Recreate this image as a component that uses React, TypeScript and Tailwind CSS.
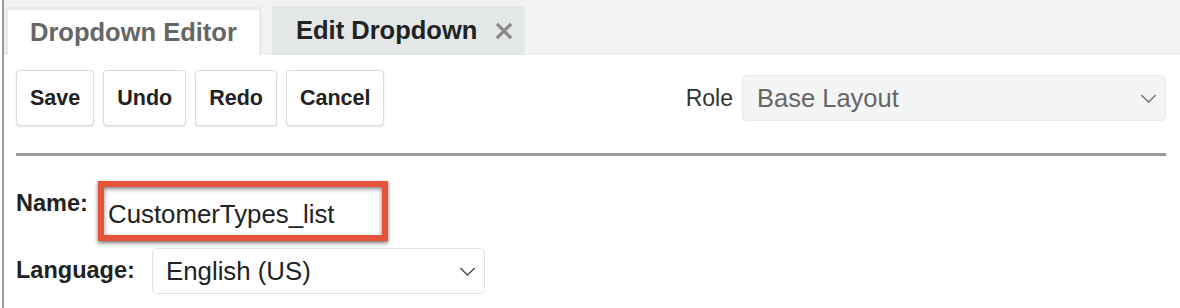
import React from 'react';

const Chevron = ({ className }: { className: string }) => (
  <svg className={className} viewBox="0 0 18 10" fill="none" stroke="currentColor" strokeWidth={1.6}>
    <path d="M1 1l8 8 8-8" />
  </svg>
);

export default function App() {
  const buttons = ['Save', 'Undo', 'Redo', 'Cancel'];

  return (
    <div className="w-[1180px] h-[308px] bg-white pl-[2px] font-['Liberation_Sans',Arial,sans-serif] text-[#333] overflow-hidden">
      <div className="h-full border-l-2 border-[#9a9a9a]">
        {/* Tab strip */}
        <div className="h-[55px] bg-[#f1f2f2] flex items-end pl-[1px] gap-[10px]">
          <div className="h-[48px] w-[257px] bg-white border-t-[3px] border-x-[3px] border-[#e7ebeb] pl-[22px] flex items-center">
            <span className="text-[25.5px] font-bold text-[#666] leading-none">Dropdown Editor</span>
          </div>
          <div className="h-[49px] w-[253px] bg-[#e3e7e8] pl-[24px] pr-[12px] flex items-center justify-between">
            <span className="text-[25.5px] font-bold text-[#222] leading-none">Edit Dropdown</span>
            <svg className="w-[18px] h-[18px] text-[#8a8a8a]" viewBox="0 0 18 18" stroke="currentColor" strokeWidth={3.2} strokeLinecap="square">
              <path d="M3 3l12 12M15 3L3 15" />
            </svg>
          </div>
        </div>

        <div className="pl-[12px] pr-[14px]">
          {/* Toolbar */}
          <div className="mt-[15px] flex items-center justify-between">
            <div className="flex gap-[9px]">
              {buttons.map((b) => (
                <button
                  key={b}
                  className="h-[56px] px-[13px] bg-white border border-[#dcdcdc] rounded-[4px] shadow-[0_1px_2px_rgba(0,0,0,0.12)] text-[21.5px] font-bold text-[#222]"
                >
                  {b}
                </button>
              ))}
            </div>
            <div className="flex items-center gap-[9px]">
              <span className="text-[23px] text-[#333]">Role</span>
              <div className="w-[424px] h-[46px] bg-[#f3f4f4] border border-[#e8eaea] rounded-[5px] pl-[14px] pr-[8px] flex items-center justify-between">
                <span className="text-[25.5px] text-[#666]">Base Layout</span>
                <Chevron className="w-[17px] h-[9px] text-[#777]" />
              </div>
            </div>
          </div>

          {/* Divider */}
          <div className="mt-[27px] h-[3px] bg-[#999]" />

          {/* Name */}
          <div className="mt-[25px] flex items-start">
            <span className="mt-[5px] w-[82px] text-[23.5px] font-bold text-[#222]">Name:</span>
            <div className="w-[290px] h-[60px] border-[6px] border-[#e5533b] shadow-[0_2px_4px_rgba(0,0,0,0.55),inset_0_2px_4px_rgba(0,0,0,0.5)] pl-[4px] pt-[12px]">
              <span className="text-[25.8px] leading-[30px] text-[#222]">CustomerTypes_list</span>
            </div>
          </div>

          {/* Language */}
          <div className="mt-[7px] flex items-center">
            <span className="w-[136px] text-[23.5px] font-bold text-[#222]">Language:</span>
            <div className="w-[333px] h-[46px] bg-white border border-[#dde3e5] rounded-[5px] pl-[13px] pr-[8px] flex items-center justify-between">
              <span className="text-[25.8px] leading-[30px] text-[#222]">English (US)</span>
              <Chevron className="w-[17px] h-[9px] text-[#555]" />
            </div>
          </div>
        </div>
      </div>
    </div>
  );
}
